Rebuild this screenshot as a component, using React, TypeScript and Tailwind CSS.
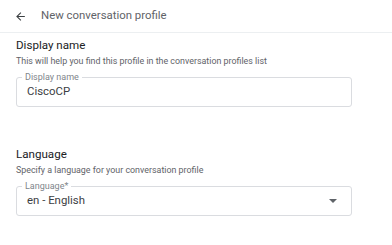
import React from "react";

function ArrowLeft() {
	return (
		<svg width="13" height="13" viewBox="0 0 24 24" fill="#3c4043">
			<path d="M20 11H7.83l5.59-5.59L12 4l-8 8 8 8 1.41-1.41L7.83 13H20v-2z" />
		</svg>
	);
}

function OutlinedField({
	label,
	value,
	select,
}: {
	label: string;
	value: string;
	select?: boolean;
}) {
	return (
		<div className="relative flex h-[30px] w-[336px] items-center rounded-[3px] border border-[#dadce0] pl-[10px] pr-[14px]">
			<span className="absolute -top-[7px] left-[5px] bg-white px-[3px] text-[9px] leading-[12px] text-[#80868b]">
				{label}
			</span>
			<span className="flex-1 text-[11.4px] text-[#3c4043]">{value}</span>
			{select && (
				<svg width="8" height="4" viewBox="0 0 10 5" fill="#5f6368">
					<path d="M0 0l5 5 5-5z" />
				</svg>
			)}
		</div>
	);
}

export default function App() {
	return (
		<div className="h-[245px] w-[392px] bg-white font-['Roboto',sans-serif]">
			<div className="flex h-[33px] items-center gap-[14px] border-b border-[#eceff1] pl-[14px]">
				<ArrowLeft />
				<span className="text-[11.4px] text-[#5f6368]">
					New conversation profile
				</span>
			</div>
			<div className="px-4">
				<h2 className="mt-[4px] text-[11.6px] leading-[16px] text-[#202124]">
					Display name
				</h2>
				<p className="mt-[3px] text-[8.9px] leading-[11px] text-[#5f6368]">
					This will help you find this profile in the conversation profiles list
				</p>
				<div className="mt-[10px]">
					<OutlinedField label="Display name" value="CiscoCP" />
				</div>
				<h2 className="mt-[39px] text-[11.6px] leading-[16px] text-[#202124]">
					Language
				</h2>
				<p className="mt-[3px] text-[8.9px] leading-[11px] text-[#5f6368]">
					Specify a language for your conversation profile
				</p>
				<div className="mt-[10px]">
					<OutlinedField label="Language*" value="en - English" select />
				</div>
			</div>
		</div>
	);
}
